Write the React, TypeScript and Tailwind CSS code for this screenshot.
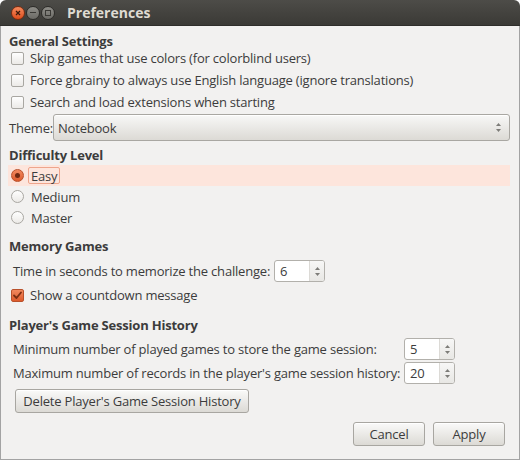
import React from "react";

function CheckBox({ checked }: { checked?: boolean }) {
  if (checked) {
    return (
      <span className="w-[13px] h-[13px] rounded-[2px] border border-[#b9512b] bg-linear-to-b from-[#f2895e] to-[#dd5a2b] flex items-center justify-center shrink-0">
        <svg width="11" height="11" viewBox="0 0 11 11">
          <path d="M2 5.5 L4.5 8 L9 2.5" fill="none" stroke="#7a2e12" strokeWidth="1.8" strokeLinecap="round" strokeLinejoin="round" />
        </svg>
      </span>
    );
  }
  return <span className="w-[13px] h-[13px] rounded-[2px] border border-[#a9a7a2] bg-linear-to-b from-[#fefefe] to-[#eceae7] shrink-0" />;
}

function Radio({ checked }: { checked?: boolean }) {
  if (checked) {
    return (
      <span className="w-[13px] h-[13px] rounded-full border border-[#b9512b] bg-linear-to-b from-[#f2895e] to-[#dd5a2b] flex items-center justify-center shrink-0">
        <span className="w-[5px] h-[5px] rounded-full bg-[#6e2810]" />
      </span>
    );
  }
  return <span className="w-[13px] h-[13px] rounded-full border border-[#a9a7a2] bg-linear-to-b from-[#fefefe] to-[#eceae7] shrink-0" />;
}

function UpDown() {
  return (
    <svg width="7" height="11" viewBox="0 0 7 11">
      <path d="M3.5 1 L6 4 L1 4 Z" fill="#7d7c78" />
      <path d="M3.5 10 L6 7 L1 7 Z" fill="#7d7c78" />
    </svg>
  );
}

function Spin({ value }: { value: string }) {
  return (
    <div className="flex w-[51px] h-[22px] border border-[#b2b0ab] rounded-[3px] bg-white overflow-hidden shrink-0">
      <div className="flex-1 pl-[5px] flex items-center text-[#3c3c3c]">{value}</div>
      <div className="w-[15px] border-l border-[#dcdad6] bg-linear-to-b from-[#f7f7f6] to-[#e8e7e4] flex items-center justify-center">
        <UpDown />
      </div>
    </div>
  );
}

function Button({ label, className }: { label: string; className?: string }) {
  return (
    <div
      className={
        "h-[24px] border border-[#a8a6a1] rounded-[3px] bg-linear-to-b from-[#fafaf9] to-[#dcdad5] flex items-center justify-center text-[#3c3c3c] shadow-[inset_0_1px_0_#ffffff] whitespace-nowrap " +
        (className ?? "")
      }
    >
      {label}
    </div>
  );
}

export default function App() {
  return (
    <div className="w-[520px] h-[460px] flex flex-col font-['Open_Sans',sans-serif] text-[13px] leading-[16px] tracking-[-0.2px] text-[#3c3c3c] bg-white whitespace-nowrap">
      {/* Title bar */}
      <div className="h-[26px] rounded-t-[6px] bg-linear-to-b from-[#4d4c48] to-[#3b3a36] flex items-center shrink-0 border-b border-[#2f2e2b]">
        <div className="flex items-center ml-[11px] gap-[1px]">
          <span className="w-[14px] h-[14px] rounded-full bg-linear-to-b from-[#f58a5c] to-[#de4c18] border border-[#7a2c10] flex items-center justify-center">
            <svg width="6" height="6" viewBox="0 0 6 6">
              <path d="M1 1 L5 5 M5 1 L1 5" stroke="#3a1a0c" strokeWidth="1.3" />
            </svg>
          </span>
          <span className="w-[14px] h-[14px] rounded-full bg-linear-to-b from-[#8e8d88] to-[#6c6b66] border border-[#2d2c29] flex items-center justify-center">
            <span className="w-[6px] h-[1.5px] bg-[#3a3935]" />
          </span>
          <span className="w-[14px] h-[14px] rounded-full bg-linear-to-b from-[#8e8d88] to-[#6c6b66] border border-[#2d2c29] flex items-center justify-center">
            <span className="w-[6px] h-[6px] border border-[#3a3935]" />
          </span>
        </div>
        <span className="ml-[12px] font-bold text-[14px] tracking-normal text-[#dfdbd2]">Preferences</span>
      </div>

      {/* Body */}
      <div className="flex-1 bg-[#f2f1f0] border-l border-r border-b border-[#a3a3a3] pl-[7px] pr-[9px] flex flex-col">
        <div className="mt-[7px] h-[16px] pl-[1px] font-bold leading-[16px]">General Settings</div>

        <div className="flex flex-col gap-[4px]">
          {[
            "Skip games that use colors (for colorblind users)",
            "Force gbrainy to always use English language (ignore translations)",
            "Search and load extensions when starting",
          ].map((t) => (
            <div key={t} className="h-[18px] flex items-center ml-[3px] gap-[6px]">
              <CheckBox />
              <span>{t}</span>
            </div>
          ))}
        </div>

        <div className="mt-[3px] h-[27px] flex items-center">
          <span className="w-[45px] pl-[1px] shrink-0">Theme:</span>
          <div className="flex-1 h-[27px] border border-[#a9a7a2] rounded-[3px] bg-linear-to-b from-[#f8f8f7] to-[#dcdad5] flex items-center pl-[4px] pr-[7px] shadow-[inset_0_1px_0_#ffffff]">
            <span className="flex-1">Notebook</span>
            <UpDown />
          </div>
        </div>

        <div className="mt-[6px] h-[16px] pl-[1px] font-bold">Difficulty Level</div>

        <div className="mt-[2px] flex flex-col">
          <div className="h-[21px] flex items-center bg-[#fde5dc] pl-[3px] gap-[4px]">
            <Radio checked />
            <span className="h-[17px] px-[2px] border border-[#eea58c] rounded-[2px] flex items-center">Easy</span>
          </div>
          <div className="h-[21px] flex items-center pl-[3px] gap-[7px]">
            <Radio />
            <span>Medium</span>
          </div>
          <div className="h-[21px] flex items-center pl-[3px] gap-[7px]">
            <Radio />
            <span>Master</span>
          </div>
        </div>

        <div className="mt-[10px] h-[16px] pl-[1px] font-bold">Memory Games</div>

        <div className="mt-[6px] h-[22px] flex items-center">
          <span className="w-[266px] pl-[5px] shrink-0">Time in seconds to memorize the challenge:</span>
          <Spin value="6" />
        </div>

        <div className="mt-[4px] h-[18px] flex items-center ml-[3px] gap-[6px]">
          <CheckBox checked />
          <span>Show a countdown message</span>
        </div>

        <div className="mt-[13px] h-[16px] pl-[1px] font-bold">Player's Game Session History</div>

        <div className="mt-[5px] h-[22px] flex items-center">
          <span className="w-[396px] pl-[5px] shrink-0">Minimum number of played games to store the game session:</span>
          <Spin value="5" />
        </div>
        <div className="mt-[2px] h-[22px] flex items-center">
          <span className="w-[396px] pl-[5px] shrink-0">Maximum number of records in the player's game session history:</span>
          <Spin value="20" />
        </div>

        <div className="mt-[5px] flex">
          <Button label="Delete Player's Game Session History" className="ml-[7px] w-[234px]" />
        </div>

        <div className="mt-[9px] flex justify-end gap-[8px] mr-[5px]">
          <Button label="Cancel" className="w-[72px]" />
          <Button label="Apply" className="w-[72px]" />
        </div>
      </div>
    </div>
  );
}
